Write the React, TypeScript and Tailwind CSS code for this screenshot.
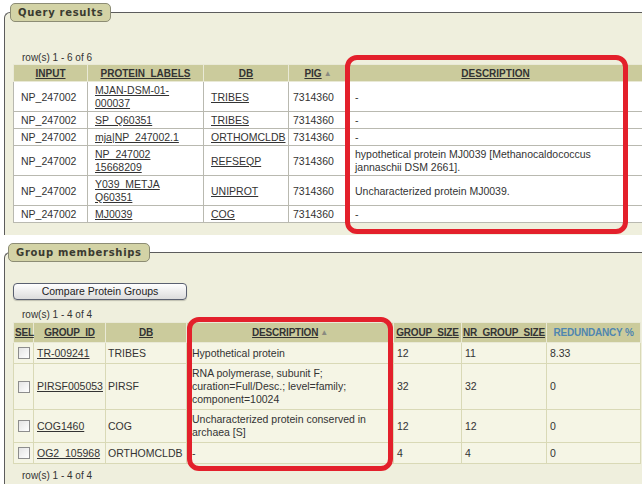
import React from "react";

const Arrow = () => (
  <span className="ml-[2px] text-[8px] text-[#8a8a80] no-underline align-[1px] inline-block">▲</span>
);

const Legend = ({ children, left }: { children: React.ReactNode; left: string }) => (
  <div
    className={`absolute top-[-10px] ${left} h-[19px] px-[7px] flex items-center rounded-[5px] border border-[#8c8c74] bg-[#d3d3a6] font-['DejaVu_Sans',sans-serif] font-bold text-[10px] tracking-[0.7px] text-[#3a3a30]`}
  >
    {children}
  </div>
);

const qRows: { input: string; label: React.ReactNode; db: string; pig: string; desc: React.ReactNode }[] = [
  { input: "NP_247002", label: <>MJAN-DSM-01-<br />000037</>, db: "TRIBES", pig: "7314360", desc: "-" },
  { input: "NP_247002", label: "SP_Q60351", db: "TRIBES", pig: "7314360", desc: "-" },
  { input: "NP_247002", label: "mja|NP_247002.1", db: "ORTHOMCLDB", pig: "7314360", desc: "-" },
  {
    input: "NP_247002",
    label: <>NP_247002<br />15668209</>,
    db: "REFSEQP",
    pig: "7314360",
    desc: <>hypothetical protein MJ0039 [Methanocaldococcus<br />jannaschii DSM 2661].</>,
  },
  { input: "NP_247002", label: <>Y039_METJA<br />Q60351</>, db: "UNIPROT", pig: "7314360", desc: "Uncharacterized protein MJ0039." },
  { input: "NP_247002", label: "MJ0039", db: "COG", pig: "7314360", desc: "-" },
];

const gRows: { id: string; db: string; desc: React.ReactNode; gs: string; nr: string; red: string }[] = [
  { id: "TR-009241", db: "TRIBES", desc: "Hypothetical protein", gs: "12", nr: "11", red: "8.33" },
  {
    id: "PIRSF005053",
    db: "PIRSF",
    desc: <>RNA polymerase, subunit F;<br />curation=Full/Desc.; level=family;<br />component=10024</>,
    gs: "32",
    nr: "32",
    red: "0",
  },
  { id: "COG1460", db: "COG", desc: <>Uncharacterized protein conserved in<br />archaea [S]</>, gs: "12", nr: "12", red: "0" },
  { id: "OG2_105968", db: "ORTHOMCLDB", desc: "-", gs: "4", nr: "4", red: "0" },
];

const thQ = "bg-[#cbcb9c] border border-[#e9e9d6] font-['Liberation_Sans',Arial,sans-serif] font-bold text-[10px] leading-[13px] pt-[2px] pb-[1px] text-center text-[#333] underline whitespace-nowrap";
const tdQ = "bg-white border border-[#b9b9b0] pl-[7px] pr-[4px] pt-[2px] pb-[1px] align-middle whitespace-nowrap";

const thG = "bg-[#cbcb9c] border border-[#e9e9d6] font-['Liberation_Sans',Arial,sans-serif] font-bold text-[10px] leading-[13px] py-[3px] text-center text-[#333] underline whitespace-nowrap tracking-[-0.2px]";
const tdG = "bg-[#f5f5e5] border border-[#d9d9b6] px-[3px] py-[3px] align-middle whitespace-nowrap";

export default function App() {
  return (
    <div className="relative w-[642px] h-[486px] overflow-hidden bg-white font-['Liberation_Sans',Arial,sans-serif] text-[10.5px] leading-[13px] text-[#333]">
      {/* Query results panel */}
      <div className="pt-[12px] pl-[4px]">
        <div className="relative w-[720px] h-[223px] border-l border-t border-[#5c5c5c] rounded-tl-[6px] bg-[#efefdd]">
          <Legend left="left-[5px]">Query results</Legend>
          <div className="pt-[38px] pl-[8px]">
            <div className="pl-[9px] text-[10px] h-[13px]">row(s) 1 - 6 of 6</div>
            <table className="border-collapse table-fixed w-[630px]">
              <colgroup>
                <col className="w-[74px]" />
                <col className="w-[116px]" />
                <col className="w-[85px]" />
                <col className="w-[59px]" />
                <col className="w-[296px]" />
              </colgroup>
              <thead>
                <tr>
                  <th className={thQ}>INPUT</th>
                  <th className={thQ}>PROTEIN_LABELS</th>
                  <th className={thQ}>DB</th>
                  <th className={thQ}>
                    PIG<Arrow />
                  </th>
                  <th className={thQ}>DESCRIPTION</th>
                </tr>
              </thead>
              <tbody>
                {qRows.map((r, i) => (
                  <tr key={i}>
                    <td className={tdQ}>{r.input}</td>
                    <td className={tdQ}>
                      <span className="underline">{r.label}</span>
                    </td>
                    <td className={tdQ}>
                      <span className="underline">{r.db}</span>
                    </td>
                    <td className={`${tdQ} !pl-[4px]`}>{r.pig}</td>
                    <td className={tdQ}>{r.desc}</td>
                  </tr>
                ))}
              </tbody>
            </table>
          </div>
        </div>
      </div>

      {/* Group memberships panel */}
      <div className="mt-[17px] pl-[4px]">
        <div className="relative w-[720px] h-[232px] border-l border-t border-[#5c5c5c] rounded-tl-[6px] bg-[#efefdd]">
          <Legend left="left-[3px]">Group memberships</Legend>
          <div className="pt-[30px] pl-[8px]">
            <button className="w-[174px] h-[17px] rounded-[4px] border border-[#5a6070] bg-gradient-to-b from-white to-[#dcdcdc] text-[10.5px] leading-[13px] text-[#222] shadow-[0_1px_1px_rgba(0,0,0,0.2)]">
              Compare Protein Groups
            </button>
            <div className="mt-[8px] pl-[9px] text-[10px] h-[14px]">row(s) 1 - 4 of 4</div>
            <table className="border-collapse table-fixed w-[627px]">
              <colgroup>
                <col className="w-[20px]" />
                <col className="w-[72px]" />
                <col className="w-[81px]" />
                <col className="w-[207px]" />
                <col className="w-[68px]" />
                <col className="w-[85px]" />
                <col className="w-[94px]" />
              </colgroup>
              <thead>
                <tr>
                  <th className={`${thG} !text-left !pl-[1px]`}>SEL</th>
                  <th className={thG}>GROUP_ID</th>
                  <th className={thG}>DB</th>
                  <th className={thG}>
                    DESCRIPTION<Arrow />
                  </th>
                  <th className={thG}>GROUP_SIZE</th>
                  <th className={thG}>NR_GROUP_SIZE</th>
                  <th className={`${thG} !no-underline !text-[#4f86b0]`}>REDUNDANCY %</th>
                </tr>
              </thead>
              <tbody>
                {gRows.map((r, i) => (
                  <tr key={i}>
                    <td className={`${tdG} !px-0`}>
                      <span className="mx-auto block w-[12px] h-[12px] my-[1px] border border-[#8d8d8d] bg-gradient-to-br from-[#e4e4e4] to-white" />
                    </td>
                    <td className={tdG}>
                      <span className="underline">{r.id}</span>
                    </td>
                    <td className={`${tdG} !pl-[2px]`}>{r.db}</td>
                    <td className={`${tdG} !pl-[5px]`}>{r.desc}</td>
                    <td className={tdG}>{r.gs}</td>
                    <td className={tdG}>{r.nr}</td>
                    <td className={tdG}>{r.red}</td>
                  </tr>
                ))}
              </tbody>
            </table>
            <div className="mt-[5px] pl-[9px] text-[10px]">row(s) 1 - 4 of 4</div>
          </div>
        </div>
      </div>

      {/* Red annotation boxes */}
      <div className="absolute left-[345px] top-[55px] w-[283px] h-[179px] border-[5px] border-[#e3202b] rounded-[12px] pointer-events-none" />
      <div className="absolute left-[187px] top-[317px] w-[206px] h-[154px] border-[5px] border-[#e3202b] rounded-[12px] pointer-events-none" />
    </div>
  );
}
